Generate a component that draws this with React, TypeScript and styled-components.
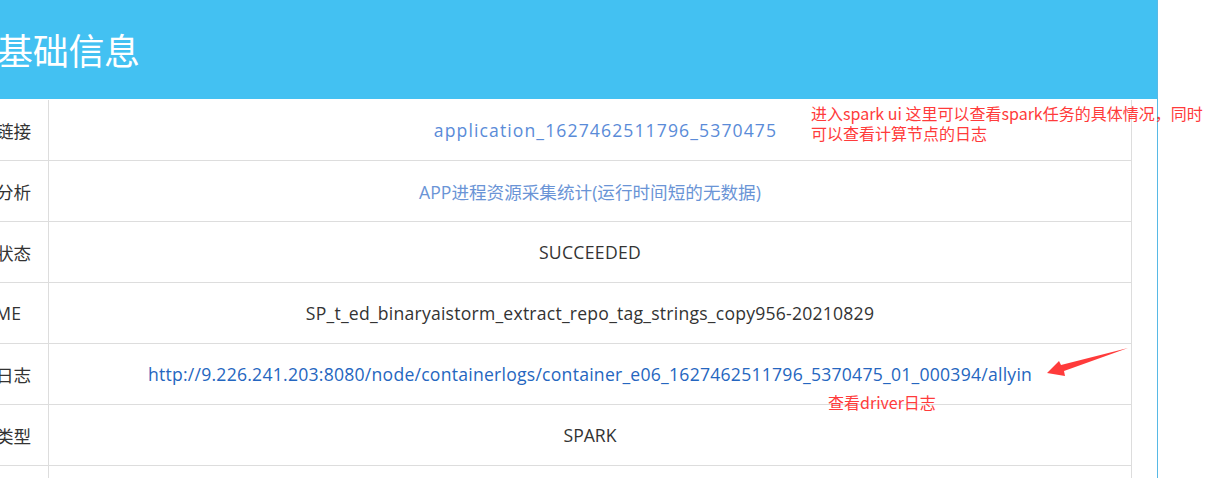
import React from "react";
import styled, { createGlobalStyle } from "styled-components";

const GlobalStyle = createGlobalStyle`
  html, body {
    margin: 0;
    padding: 0;
    background: #ffffff;
    overflow: hidden;
  }
  body {
    font-family: "Open Sans", "Noto Sans CJK SC", sans-serif;
  }
`;

const Viewport = styled.div`
  position: relative;
  width: 1221px;
  height: 478px;
  overflow: hidden;
`;

const Panel = styled.div`
  margin-left: -53px;
  width: 1210px;
  min-height: 478px;
  border-right: 1px solid #57b9e6;
`;

const Header = styled.div`
  height: 99px;
  background: #43c1f2;
  display: flex;
  align-items: center;
  padding-left: 50px;
  padding-bottom: 2px;
  box-sizing: border-box;
`;

const Title = styled.h1`
  margin: 0;
  font-family: "Noto Sans CJK SC", sans-serif;
  font-weight: 400;
  font-size: 36px;
  color: #ffffff;
  letter-spacing: -0.3px;
`;

const Table = styled.div`
  margin-top: 1px;
  margin-right: 25px;
  border-right: 1px solid #dddddd;
`;

const Row = styled.div`
  display: grid;
  grid-template-columns: 102px 1fr;
  height: 61px;
  box-sizing: border-box;
  border-bottom: 1px solid #dddddd;
`;

const Label = styled.div`
  display: flex;
  align-items: center;
  justify-content: center;
  white-space: nowrap;
  border-right: 1px solid #dddddd;
  font-size: 17.6px;
  color: #333333;
  padding-right: 3px;
`;

type Tone = "plain" | "link" | "soft" | "deep";

const Value = styled.div<{ $tone?: Tone; $spacing?: number; $shift?: number }>`
  display: flex;
  align-items: center;
  justify-content: center;
  white-space: nowrap;
  font-size: 17.6px;
  padding-left: ${(p) => p.$shift ?? 0}px;
  letter-spacing: ${(p) => p.$spacing ?? 0}px;
  color: ${(p) =>
    p.$tone === "link"
      ? "#5a8bd8"
      : p.$tone === "soft"
      ? "#6a94d6"
      : p.$tone === "deep"
      ? "#2566c0"
      : "#333333"};
`;

const Note = styled.div<{ $left: number; $top: number }>`
  position: absolute;
  left: ${(p) => p.$left}px;
  top: ${(p) => p.$top}px;
  font-family: "Noto Sans CJK SC", sans-serif;
  font-size: 16px;
  line-height: 20px;
  color: #ff3b3b;
  white-space: nowrap;
`;

const ArrowSvg = styled.svg`
  position: absolute;
  left: 0;
  top: 0;
  pointer-events: none;
`;

const rows: { label: string; value: string; tone?: Tone; spacing?: number; shift?: number }[] = [
  {
    label: "任务链接",
    value: "application_1627462511796_5370475",
    tone: "link",
    spacing: 1.1,
    shift: 31,
  },
  { label: "资源分析", value: "APP进程资源采集统计(运行时间短的无数据)", tone: "soft" },
  { label: "任务状态", value: "SUCCEEDED", spacing: 0.3 },
  {
    label: "NAME",
    value: "SP_t_ed_binaryaistorm_extract_repo_tag_strings_copy956-20210829",
    spacing: 0.22,
  },
  {
    label: "运行日志",
    value:
      "http://9.226.241.203:8080/node/containerlogs/container_e06_1627462511796_5370475_01_000394/allyin",
    tone: "deep",
    spacing: 0.24,
  },
  { label: "任务类型", value: "SPARK" },
  { label: "", value: "" },
];

export default function App() {
  return (
    <Viewport>
      <GlobalStyle />
      <Panel>
        <Header>
          <Title>基础信息</Title>
        </Header>
        <Table>
          {rows.map((r, i) => (
            <Row key={i}>
              <Label>{r.label}</Label>
              <Value $tone={r.tone} $spacing={r.spacing} $shift={r.shift}>
                {r.value}
              </Value>
            </Row>
          ))}
        </Table>
      </Panel>
      <Note $left={811} $top={103}>
        进入spark ui 这里可以查看spark任务的具体情况，同时
        <br />
        可以查看计算节点的日志
      </Note>
      <Note $left={828} $top={392}>
        查看driver日志
      </Note>
      <ArrowSvg width={1221} height={478} viewBox="0 0 1221 478">
        <polygon
          points="1047,373 1059,361 1061,365 1128,348 1064,371 1065,376"
          fill="#ff3b3b"
        />
      </ArrowSvg>
    </Viewport>
  );
}
